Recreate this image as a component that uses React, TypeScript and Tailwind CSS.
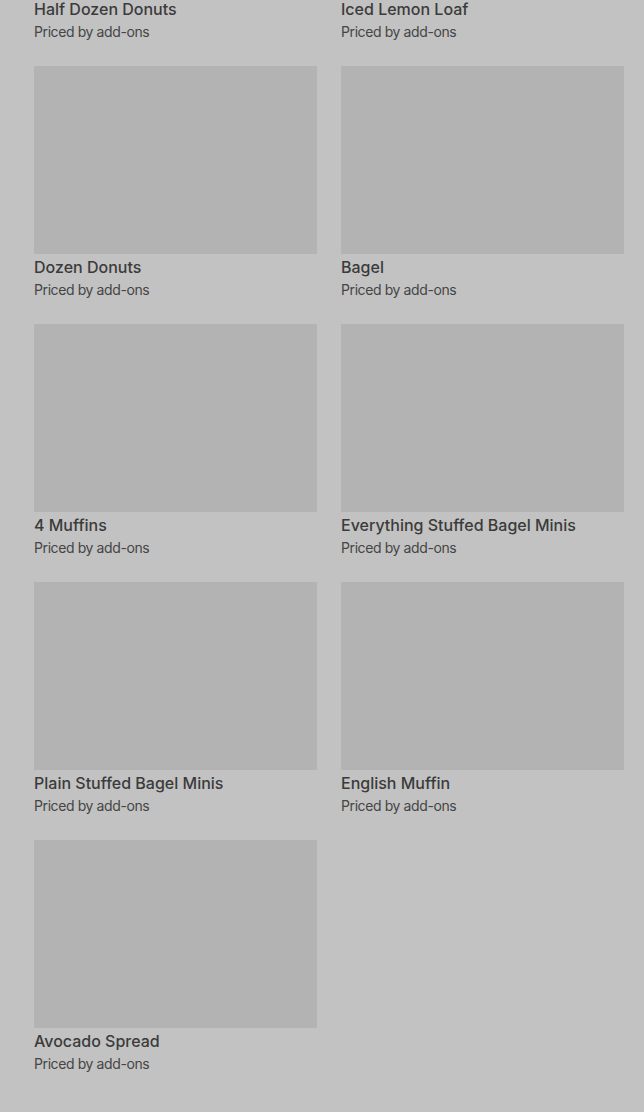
const items = [
  "Half Dozen Donuts",
  "Iced Lemon Loaf",
  "Dozen Donuts",
  "Bagel",
  "4 Muffins",
  "Everything Stuffed Bagel Minis",
  "Plain Stuffed Bagel Minis",
  "English Muffin",
  "Avocado Spread",
];

function ItemCard({ name }: { name: string }) {
  return (
    <div className="flex flex-col">
      <div className="h-[188px] w-full bg-[#b3b3b3]" />
      <div className="mt-px text-[16px] leading-6 font-medium text-[#3b3b3b]">{name}</div>
      <div className="text-[14px] leading-[22px] text-[#454545] tracking-[-0.4px]">Priced by add-ons</div>
    </div>
  );
}

export default function App() {
  return (
    <div
      className="min-h-[1112px] bg-[#c2c2c2] overflow-hidden"
      style={{ fontFamily: "Inter, 'Noto Sans', sans-serif" }}
    >
      <div className="-mt-[192px] grid grid-cols-2 gap-x-6 gap-y-[23px] pl-[34px] pr-[20px]">
        {items.map((name) => (
          <ItemCard key={name} name={name} />
        ))}
      </div>
    </div>
  );
}
